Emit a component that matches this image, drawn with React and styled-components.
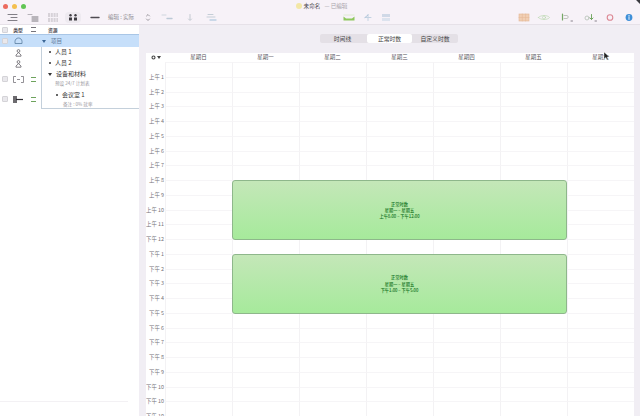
import React from "react";
import styled, { createGlobalStyle } from "styled-components";

const FONT = `"Noto Sans CJK SC", "Liberation Sans", sans-serif`;

const days = ["星期日", "星期一", "星期二", "星期三", "星期四", "星期五", "星期六"];
const hours = [
  "上午 1", "上午 2", "上午 3", "上午 4", "上午 5", "上午 6", "上午 7", "上午 8",
  "上午 9", "上午 10", "上午 11", "下午 12", "下午 1", "下午 2", "下午 3", "下午 4",
  "下午 5", "下午 6", "下午 7", "下午 8", "下午 9", "下午 10", "下午 10", "下午 10",
];

const Global = createGlobalStyle`
  html, body { margin: 0; padding: 0; background: #f1eef4; }
  body { font-family: ${FONT}; }
`;

const Win = styled.div`
  position: relative;
  width: 640px;
  height: 416px;
  overflow: hidden;
  display: flex;
  flex-direction: column;
  background: #f1eef4;
  &::after {
    content: "";
    position: absolute;
    top: -4px;
    right: -4px;
    width: 7px;
    height: 7px;
    background: #3a3a40;
    transform: rotate(45deg);
  }
`;

const Head = styled.div`
  flex: none;
  height: 25px;
  background: #f7f2f8;
  border-bottom: 1px solid #e6e1e8;
  box-sizing: border-box;
`;

const TitleRow = styled.div`
  display: grid;
  grid-template-columns: 1fr auto 1fr;
  height: 11px;
  align-items: center;
  padding: 1px 0 0 3px;
  box-sizing: border-box;
`;

const Lights = styled.div`
  display: flex;
  gap: 4px;
`;

const Light = styled.span`
  width: 5px;
  height: 5px;
  border-radius: 50%;
  background: ${(p) => p.$color};
`;

const Title = styled.div`
  display: flex;
  align-items: center;
  gap: 2px;
  font-size: 5.6px;
  line-height: 9px;
  color: #4a464c;
`;

const Doc = styled.span`
  width: 6px;
  height: 6px;
  border-radius: 50%;
  background: #f3e7a6;
`;

const Edited = styled.span`
  color: #a8a4aa;
  margin-left: 2px;
`;

const Tools = styled.div`
  display: flex;
  align-items: center;
  height: 13px;
  padding-left: 4px;
`;

const Slot = styled.div`
  flex: none;
  width: ${(p) => p.$w || 16}px;
  height: 11px;
  margin-left: ${(p) => p.$ml || 0}px;
  display: flex;
  align-items: center;
  justify-content: center;
  border-radius: 4px;
  opacity: ${(p) => p.$fade || 1};
  background: ${(p) => (p.$on ? "#eeeaf0" : "transparent")};
  svg { display: block; }
`;

const ToolLabel = styled.span`
  flex: none;
  width: 30px;
  margin-left: 5px;
  font-size: 5.5px;
  line-height: 11px;
  white-space: nowrap;
  color: #8d8a90;
`;

const Body = styled.div`
  flex: 1;
  min-height: 0;
  display: flex;
`;

const Side = styled.aside`
  flex: none;
  width: 139px;
  background: #fff;
  display: flex;
  flex-direction: column;
`;

const SideHead = styled.div`
  flex: none;
  height: 9px;
  display: grid;
  grid-template-columns: 10px 16px 15px 1fr;
  align-items: center;
  font-size: 4.8px;
  font-weight: 700;
  color: #55525a;
`;

const HeadName = styled.span`
  padding-left: 7px;
`;

const Cell = styled.div`
  display: flex;
  align-items: center;
  justify-content: center;
`;

const Check = styled.span`
  width: 4px;
  height: 4px;
  border: 1px solid #d4d3d7;
  background: #e9e8ec;
  border-radius: 1px;
`;

const SelRow = styled.div`
  flex: none;
  height: 13px;
  display: grid;
  grid-template-columns: 10px 16px 15px 1fr;
  align-items: center;
  background: #c6dffa;
  border-top: 1px solid #a9c6e6;
  box-sizing: border-box;
  font-size: 5.6px;
  color: #5f7d9c;
`;

const Row = styled.div`
  flex: none;
  height: ${(p) => p.$h}px;
  display: grid;
  grid-template-columns: 10px 16px 15px 1fr;
`;

const Outline = styled.div`
  border-left: 1px solid #c4d0db;
  border-bottom: ${(p) => (p.$last ? "1px solid #c4d0db" : "none")};
  padding-left: ${(p) => p.$indent}px;
  padding-top: ${(p) => p.$top || 0}px;
  box-sizing: border-box;
`;

const ItemName = styled.div`
  display: flex;
  align-items: center;
  gap: 4px;
  font-size: 6px;
  line-height: 10px;
  color: #333;
`;

const ItemNote = styled.div`
  font-size: 4.6px;
  line-height: 8px;
  color: #9a989e;
  padding-left: 7px;
  white-space: nowrap;
`;

const Dot = styled.span`
  width: 2px;
  height: 2px;
  border-radius: 50%;
  background: #333;
`;

const Open = styled.span`
  width: 0;
  height: 0;
  border-left: 2px solid transparent;
  border-right: 2px solid transparent;
  border-top: 3px solid ${(p) => p.$color || "#333"};
`;

const OpenName = styled.span`
  display: flex;
  align-items: center;
  gap: 5px;
  padding-left: 1px;
`;

const Equal = styled.span`
  width: 5px;
  height: 3px;
  border-top: 1px solid ${(p) => p.$color};
  border-bottom: 1px solid ${(p) => p.$color};
`;

const SideFoot = styled.div`
  margin-top: auto;
  margin-bottom: 14px;
  width: 128px;
  border-top: 1px solid #f3f1f4;
`;

const Main = styled.main`
  flex: 1;
  min-width: 0;
  padding: 9px 6px 0 7px;
  display: flex;
  flex-direction: column;
`;

const Segments = styled.div`
  flex: none;
  align-self: flex-start;
  display: flex;
  height: 9px;
  margin-left: 174px;
  background: #e4e0e6;
  border-radius: 2px;
  font-size: 5.8px;
  line-height: 9px;
  color: #444;
`;

const Segment = styled.div`
  width: ${(p) => p.$w}px;
  margin-left: ${(p) => p.$ml || 0}px;
  text-align: center;
  border-radius: 2px;
  background: ${(p) => (p.$on ? "#fff" : "transparent")};
`;

const Cal = styled.div`
  flex: 1;
  min-height: 0;
  margin-top: 10px;
  background: #fff;
  overflow: hidden;
`;

const DayHead = styled.div`
  height: 9px;
  display: grid;
  grid-template-columns: 19px repeat(7, 67px);
  font-size: 5.5px;
  line-height: 9px;
  color: #55525a;
  text-align: center;
`;

const Gear = styled.div`
  display: flex;
  align-items: center;
  justify-content: center;
  gap: 1px;
`;

const Week = styled.div`
  display: grid;
  grid-template-columns: 19px repeat(7, 67px);
  grid-auto-rows: 14.75px;
`;

const Hour = styled.div`
  grid-column: 1;
  grid-row: ${(p) => p.$row};
  justify-self: end;
  padding-right: 1px;
  font-size: 5.4px;
  line-height: 8px;
  white-space: nowrap;
  color: #77747b;
  transform: translateY(-4px);
`;

const Slice = styled.div`
  grid-column: ${(p) => p.$col};
  grid-row: ${(p) => p.$row};
  border-top: 1px solid #f6f5f7;
  border-left: 1px solid #f3f2f4;
`;

const Block = styled.div`
  grid-column: 3 / 8;
  grid-row: ${(p) => p.$rows};
  z-index: 1;
  display: flex;
  flex-direction: column;
  align-items: center;
  justify-content: center;
  margin-bottom: -1px;
  box-sizing: border-box;
  background: linear-gradient(#c4e7b8, #a6ea9b);
  border: 1px solid #8eb78b;
  border-radius: 3px;
  font-size: 4.2px;
  font-weight: 500;
  line-height: 6.3px;
  color: #0c7018;
`;

const Pointer = styled.svg`
  position: absolute;
  left: 603px;
  top: 51px;
`;

function Stroke({ w = 16, h = 11, children }) {
  return (
    <svg width={w} height={h} viewBox={`0 0 ${w} ${h}`} fill="none" strokeLinecap="round">
      {children}
    </svg>
  );
}

function PersonIcon() {
  return (
    <svg width="7" height="8" viewBox="0 0 7 8" fill="none" stroke="#66636a" strokeWidth="0.8">
      <circle cx="3.5" cy="2" r="1.4" />
      <path d="M3.5 3.6 1 6v1.2h5V6z" />
    </svg>
  );
}

function CloudIcon() {
  return (
    <svg width="9" height="8" viewBox="0 0 9 8" fill="none" stroke="#5b7d9f" strokeWidth="0.8">
      <path d="M1 6.5V4.4C1 2.6 2.6 1 4.5 1S8 2.6 8 4.4v2.1z" />
    </svg>
  );
}

function App() {
  const rows = Array.from({ length: 25 }, (_, i) => i + 1);
  const cols = [2, 3, 4, 5, 6, 7, 8];
  return (
    <Win>
      <Global />
      <Head>
        <TitleRow>
          <Lights>
            <Light $color="#ec6a5e" />
            <Light $color="#f4bf4f" />
            <Light $color="#61c554" />
          </Lights>
          <Title>
            <Doc />
            未命名 <Edited>— 已编辑</Edited>
          </Title>
        </TitleRow>
        <Tools>
          <Slot $fade={0.8}>
            <Stroke>
              <path d="M4 2.5h9M7 5.5h6M4 8.5h9" stroke="#55525a" strokeWidth="0.9" />
            </Stroke>
          </Slot>
          <Slot $ml={5} $fade={0.85}>
            <Stroke>
              <path d="M3 2.5h4" stroke="#aaa7ad" strokeWidth="1" />
              <path d="M7 5h6M7 7h6M7 9h6" stroke="#55525a" strokeWidth="0.9" />
            </Stroke>
          </Slot>
          <Slot $ml={4} $fade={0.7}>
            <Stroke>
              <path d="M3 2h10M3 4h10M3 7h10M3 9h10" stroke="#76737a" strokeWidth="0.7" strokeDasharray="2 0.8" strokeLinecap="butt" />
            </Stroke>
          </Slot>
          <Slot $ml={4} $on>
            <Stroke>
              <circle cx="5.5" cy="3.2" r="1.2" fill="#3f3c42" />
              <circle cx="10.5" cy="3.2" r="1.2" fill="#3f3c42" />
              <path d="M4 8.5V5.5h3v3zM9 8.5V5.5h3v3z" fill="#3f3c42" />
            </Stroke>
          </Slot>
          <Slot $ml={6}>
            <Stroke>
              <path d="M4 5.5h8" stroke="#4f4c52" strokeWidth="1.4" />
            </Stroke>
          </Slot>
          <ToolLabel>编辑 : 实际</ToolLabel>
          <Slot $w={8} $ml={6}>
            <Stroke w={8}>
              <path d="m2.5 4 1.5-1.5L5.5 4M2.5 7 4 8.5 5.5 7" stroke="#77747b" strokeWidth="0.7" />
            </Stroke>
          </Slot>
          <Slot $ml={7}>
            <Stroke>
              <path d="M3 3h4" stroke="#cfd6de" strokeWidth="1" />
              <path d="M8 6.5h5" stroke="#bcc9d6" strokeWidth="1.4" />
            </Stroke>
          </Slot>
          <Slot $ml={7}>
            <Stroke>
              <path d="M8 2.5v5M6.5 7 8 8.5 9.5 7" stroke="#bcc4cc" strokeWidth="0.9" />
            </Stroke>
          </Slot>
          <Slot $ml={5}>
            <Stroke>
              <path d="M5 2.5h5M4 5h8" stroke="#c5ced7" strokeWidth="1" />
              <path d="M7 8h6" stroke="#bcd0e2" strokeWidth="1.4" />
            </Stroke>
          </Slot>
          <Slot $ml={122}>
            <Stroke>
              <path d="M2.5 4.5 5 6.5h6l2.5-2v4h-11z" fill="#8ec75c" />
              <path d="M3 3h10" stroke="#d9ebc6" strokeWidth="0.8" />
            </Stroke>
          </Slot>
          <Slot $ml={3}>
            <Stroke>
              <path d="M5 5.5h6M8 2.5v6" stroke="#c3d2e2" strokeWidth="1" />
              <path d="M5 5.5 8 3" stroke="#b2c6da" strokeWidth="1" />
            </Stroke>
          </Slot>
          <Slot $ml={2}>
            <Stroke>
              <rect x="4" y="2" width="8" height="3" fill="#d0d9e7" />
              <rect x="4" y="6" width="8" height="3" fill="#dce3ee" />
            </Stroke>
          </Slot>
          <Slot $ml={122} $fade={0.85}>
            <Stroke>
              <rect x="3" y="2" width="10" height="7" fill="#f0c9a9" stroke="#e2ad84" strokeWidth="0.6" />
              <path d="M6.3 2v7M9.6 2v7M3 5.5h10" stroke="#e2ad84" strokeWidth="0.5" />
            </Stroke>
          </Slot>
          <Slot $ml={4}>
            <Stroke>
              <path d="M2.5 5.5C4.5 2.8 11.5 2.8 13.5 5.5 11.5 8.2 4.5 8.2 2.5 5.5z" stroke="#bcd9b0" strokeWidth="0.7" />
              <circle cx="8" cy="5.5" r="1.5" stroke="#bcd9b0" strokeWidth="0.7" />
            </Stroke>
          </Slot>
          <Slot $ml={6} $fade={0.85}>
            <Stroke>
              <path d="M4.5 2v6" stroke="#5f9c4c" strokeWidth="1.2" />
              <path d="M6 3.5h3c1.6 0 1.6 3 0 3H6" stroke="#a7b0a4" strokeWidth="0.8" />
              <path d="M13 9h1.5" stroke="#55525a" strokeWidth="0.8" />
            </Stroke>
          </Slot>
          <Slot $ml={8} $fade={0.85}>
            <Stroke>
              <circle cx="5" cy="6" r="2" stroke="#a7b8a8" strokeWidth="0.8" />
              <path d="M9.5 2.5v5M8 6l1.5 1.5L11 6" stroke="#5f9c4c" strokeWidth="1" />
              <path d="M13 9h1.5" stroke="#55525a" strokeWidth="0.8" />
            </Stroke>
          </Slot>
          <Slot $ml={4}>
            <Stroke>
              <circle cx="8" cy="5.5" r="2.8" stroke="#dc8793" strokeWidth="1.1" />
            </Stroke>
          </Slot>
          <Slot $ml={3}>
            <Stroke>
              <circle cx="8" cy="5.5" r="3.4" fill="#3e8fd8" />
              <path d="M8 5v2.4M8 3.4v.6" stroke="#fff" strokeWidth="0.9" />
            </Stroke>
          </Slot>
        </Tools>
      </Head>
      <Body>
        <Side>
          <SideHead>
            <Cell>
              <Check />
            </Cell>
            <Cell>类型</Cell>
            <Cell>
              <Equal $color="#77747b" />
            </Cell>
            <HeadName>资源</HeadName>
          </SideHead>
          <SelRow>
            <Cell>
              <Check />
            </Cell>
            <Cell>
              <CloudIcon />
            </Cell>
            <span />
            <OpenName>
              <Open $color="#3c6796" />
              项目
            </OpenName>
          </SelRow>
          <Row $h={11}>
            <span />
            <Cell>
              <PersonIcon />
            </Cell>
            <span />
            <Outline $indent={7}>
              <ItemName>
                <Dot />
                人员 1
              </ItemName>
            </Outline>
          </Row>
          <Row $h={11}>
            <span />
            <Cell>
              <PersonIcon />
            </Cell>
            <span />
            <Outline $indent={7}>
              <ItemName>
                <Dot />
                人员 2
              </ItemName>
            </Outline>
          </Row>
          <Row $h={20}>
            <Cell>
              <Check />
            </Cell>
            <Cell>
              <svg width="11" height="7" viewBox="0 0 11 7" fill="none" stroke="#66636a" strokeWidth="0.7">
                <path d="M3 .5H.5v6H3M8 .5h2.5v6H8M4 3.5h3" />
              </svg>
            </Cell>
            <Cell>
              <Equal $color="#6ea35d" />
            </Cell>
            <Outline $indent={6}>
              <ItemName>
                <Open />
                设备和材料
              </ItemName>
              <ItemNote>预设 24/7 计划表</ItemNote>
            </Outline>
          </Row>
          <Row $h={20}>
            <Cell>
              <Check />
            </Cell>
            <Cell>
              <svg width="11" height="7" viewBox="0 0 11 7" fill="none" stroke="#2f2d32">
                <path d="M1 0v7M3 0v7" strokeWidth="1.4" />
                <path d="M3 3.5h7" strokeWidth="1.2" />
              </svg>
            </Cell>
            <Cell>
              <Equal $color="#6ea35d" />
            </Cell>
            <Outline $indent={14} $last $top={1}>
              <ItemName>
                <Dot />
                会议室 1
              </ItemName>
              <ItemNote>备注 : 0% 就率</ItemNote>
            </Outline>
          </Row>
          <SideFoot />
        </Side>
        <Main>
          <Segments>
            <Segment $w={45}>时间线</Segment>
            <Segment $w={45} $ml={2} $on>
              正常时数
            </Segment>
            <Segment $w={46}>自定义时数</Segment>
          </Segments>
          <Cal>
            <DayHead>
              <Gear>
                <svg width="5" height="5" viewBox="0 0 5 5">
                  <circle cx="2.5" cy="2.5" r="1.5" fill="none" stroke="#444" strokeWidth="1.1" />
                </svg>
                <Open $color="#444" />
              </Gear>
              {days.map((d) => (
                <div key={d}>{d}</div>
              ))}
            </DayHead>
            <Week>
              {rows.map((r) =>
                cols.map((c) => <Slice key={`${r}-${c}`} $row={r} $col={c} />)
              )}
              {hours.map((h, i) => (
                <Hour key={i} $row={i + 2}>
                  {h}
                </Hour>
              ))}
              <Block $rows="9 / 13">
                <div>正常时数</div>
                <div>星期一 – 星期五</div>
                <div>上午8:00 – 下午12:00</div>
              </Block>
              <Block $rows="14 / 18">
                <div>正常时数</div>
                <div>星期一 – 星期五</div>
                <div>下午1:00 – 下午5:00</div>
              </Block>
            </Week>
          </Cal>
        </Main>
      </Body>
      <Pointer width="7" height="10" viewBox="0 0 7 10">
        <path d="M1 1v7l1.8-1.6L4 9l1.2-.5L4 6h2.4z" fill="#222" stroke="#fff" strokeWidth="0.4" />
      </Pointer>
    </Win>
  );
}

export default App;
